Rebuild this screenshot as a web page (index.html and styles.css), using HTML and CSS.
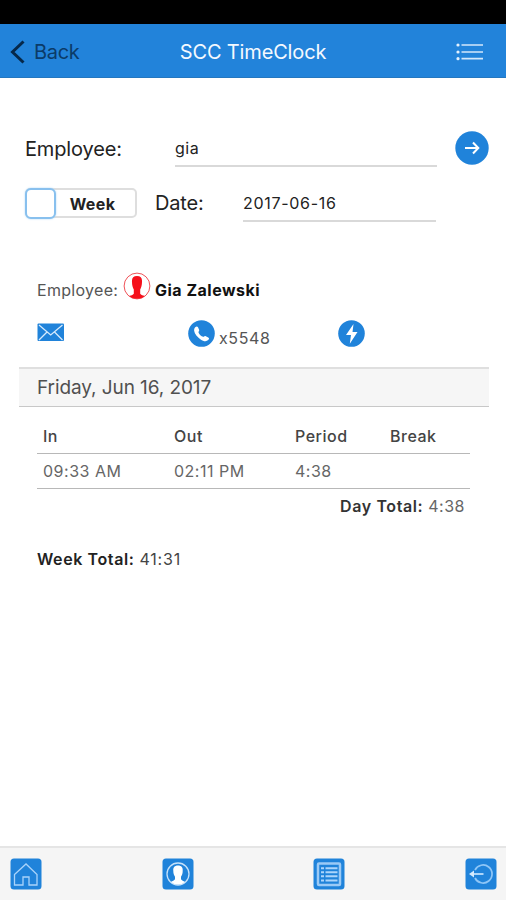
FILE: index.html
```html
<!DOCTYPE html>
<html lang="en">
<head>
<meta charset="utf-8">
<title>SCC TimeClock</title>
<link rel="stylesheet" href="styles.css">
</head>
<body>
<div class="status"></div>
<header class="navbar">
  <a class="back">
    <svg width="16" height="26" viewBox="0 0 16 26"><path d="M14.500 2.500 3.500 13l11 10.500" fill="none" stroke="#06284a" stroke-width="3"/></svg>
    <span class="back-label">Back</span>
  </a>
  <h1 class="title"><span>SCC TimeClock</span></h1>
  <svg class="menu" width="28" height="20" viewBox="0 0 28 20"><g stroke="#d3e8fb" stroke-width="1.700"><path d="M5.500 3H27M5.500 10H27M5.500 16.700H27"/></g><g fill="#e4f1fd"><circle cx="2" cy="3" r="1.600"/><circle cx="2" cy="10" r="1.600"/><circle cx="2" cy="16.700" r="1.600"/></g></svg>
</header>
<main class="content">
  <div class="search-row">
    <label class="label">Employee:</label>
    <div class="field name-field"><span>gia</span></div>
    <svg class="go" width="34" height="34" viewBox="0 0 34 34"><circle cx="17" cy="17" r="16.700" fill="#2083da"/><path d="M10 17H23M18 11.500 23.300 17 18 22.500" fill="none" stroke="#fff" stroke-width="2"/></svg>
  </div>
  <div class="date-row">
    <div class="toggle"><span class="knob"></span><b>Week</b></div>
    <label class="label">Date:</label>
    <div class="field date-field"><span>2017-06-16</span></div>
  </div>
  <div class="person">
    <span class="person-label">Employee:</span>
    <svg width="28" height="28" viewBox="0 0 28 28"><circle cx="14" cy="14" r="12.900" fill="#fff" stroke="#f05258" stroke-width="1"/><path d="M14 4c3.700 0 5.300 2 5 6 0 3.300-.8 5.500-1.800 7.500v4.300c.8 1.300 2.800 1.600 4.600 2.400a13 13 0 0 1-15.600 0c1.800-.8 3.800-1.100 4.600-2.400v-4.300C9.800 15.500 9 13.300 9 10c-.3-4 1.300-6 5-6Z" fill="#f5101b"/></svg>
    <b class="person-name">Gia Zalewski</b>
  </div>
  <div class="contacts">
    <svg class="mail" width="28" height="19" viewBox="0 0 28 19"><rect x=".5" y=".5" width="26.500" height="17.500" rx="1" fill="#2083da"/><path d="m2 2 11.700 10L25.500 2M2 17l8-8M25.500 17l-8-8" fill="none" stroke="#d6eafc" stroke-width="1.300"/></svg>
    <svg width="27" height="27" viewBox="0 0 27 27"><circle cx="13.500" cy="13.500" r="13.300" fill="#2083da"/><path d="M7.200 7.200C8.400 6 9.500 6.200 10 7.300l1.200 2.800c.3.800-.9 1.600-.7 2.300.8 2 2.600 3.700 4.700 4.400.8.200 1.400-1 2.200-.7l2.800 1.400c1.100.6 1.100 1.500 0 2.600-1.800 1.700-4.700 1.300-7.600-.7-3.200-2.100-6-5.200-6.400-8.300-.2-1.600.1-3 1-3.900Z" fill="#fff"/></svg>
    <span class="ext">x5548</span>
    <svg class="bolt" width="27" height="27" viewBox="0 0 27 27"><circle cx="13.500" cy="13.500" r="13.300" fill="#2083da"/><path d="M15.500 4 8 15h5l-1.200 8.700L19.500 12h-5Z" fill="#fff"/></svg>
  </div>
  <div class="day-bar"><span>Friday, Jun 16, 2017</span></div>
  <table class="times">
    <colgroup><col class="c-in"><col class="c-out"><col class="c-period"><col></colgroup>
    <tr><th>In</th><th>Out</th><th>Period</th><th>Break</th></tr>
    <tr><td>09:33 AM</td><td>02:11 PM</td><td>4:38</td><td></td></tr>
  </table>
  <div class="day-total"><b>Day Total:</b> <span>4:38</span></div>
  <div class="week-total"><b>Week Total:</b> <span>41:31</span></div>
</main>
<footer class="tabs">
  <svg width="32" height="32" viewBox="0 0 32 32"><rect x=".5" y=".5" width="31" height="31" rx="3.500" fill="#2083da"/><path d="M4.500 16.500 16 6l11 10.500V27h-8v-8h-6v8H4.500Z" fill="none" stroke="#a9d3fa" stroke-width="1.300"/></svg>
  <svg width="32" height="32" viewBox="0 0 32 32"><rect x=".5" y=".5" width="31" height="31" rx="3.500" fill="#2083da"/><circle cx="16" cy="16" r="11" fill="none" stroke="#c5e1fa" stroke-width="1.300"/><path d="M16 7.500c3.600 0 5 2.200 4.700 5.200 0 2.800-.7 4.300-1.700 6v2.500c.8 1.400 2.400 1.400 4 2.700a10.700 10.700 0 0 1-14 0c1.600-1.300 3.200-1.300 4-2.700v-2.500c-1-1.700-1.700-3.200-1.700-6-.3-3 1.100-5.200 4.700-5.200Z" fill="#fff"/></svg>
  <svg width="32" height="32" viewBox="0 0 32 32"><rect x=".5" y=".5" width="31" height="31" rx="3.500" fill="#2083da"/><rect x="5" y="5.500" width="22" height="21.500" rx="1" fill="none" stroke="#9bcaf6" stroke-width="2.500"/><path d="M8 10.300h3M12.500 10.300h12M8 14.300h3M12.500 14.300h12M8 18.300h3M12.500 18.300h12M8 22.500h3M12.500 22.500h12" stroke="#acd5fb" stroke-width="1.900"/></svg>
  <svg width="32" height="32" viewBox="0 0 32 32"><rect x=".5" y=".5" width="31" height="31" rx="3.500" fill="#2083da"/><path d="M10 12a9 9 0 1 1 0 8" fill="none" stroke="#8fc6f7" stroke-width="1.700"/><path d="M7 16h11.500" stroke="#b5dafb" stroke-width="1.900"/><path d="m4 16 5-3.500v7Z" fill="#d5eafd"/></svg>
</footer>
</body>
</html>
```
FILE: styles.css
```css
* { box-sizing: border-box; }
body {
  margin: 0;
  height: 900px;
  display: flex;
  flex-direction: column;
  background: #fff;
  color: #222;
  font-family: Inter, "Liberation Sans", sans-serif;
  font-size: 16px;
  letter-spacing: 0.5px;
  overflow: hidden;
}
svg { display: block; flex: none; }
.status { height: 24px; background: #000; }
.navbar {
  height: 54px;
  padding-top: 2px;
  display: grid;
  grid-template-columns: 120px 1fr 120px;
  align-items: center;
  background: #2283da;
  border-bottom: 1px solid #2577bf;
  font-size: 20px;
}
.back { display: flex; align-items: center; padding-left: 9px; gap: 9px; color: #0b3b68; letter-spacing: -0.3px; }
.title { margin: 0; text-align: center; font-size: 20px; font-weight: 400; letter-spacing: -0.15px; color: #f4f9ff; }
.menu { justify-self: end; margin-right: 22px; }
.content { flex: 1; padding: 52px 17px 0 19px; }
.search-row { height: 37px; display: flex; align-items: flex-start; padding-left: 6px; }
.label { font-size: 20px; line-height: 37px; letter-spacing: -0.15px; }
.search-row .label { width: 150px; line-height: 38px; }
.field { height: 37px; line-height: 36px; border-bottom: 2px solid #d9d9d9; }
.name-field { width: 262px; line-height: 37px; }
.go { margin: 1px 0 0 18px; }
.date-row { height: 37px; margin-top: 18px; display: flex; padding-left: 6px; }
.toggle {
  width: 112px;
  height: 30px;
  margin: 3px 18px 0 0;
  display: flex;
  border: 2px solid #dedede;
  border-radius: 5px;
}
.toggle b { flex: 1; padding-right: 6px; text-align: center; line-height: 28px; letter-spacing: 0.4px; }
.knob { width: 31px; height: 31px; margin: -2px 0 0 -2px; border: 2px solid #88c0ee; border-radius: 6px; background: #fff; box-shadow: 0 0 2px #a8d5f6; }
.date-row .label { width: 88px; }
.date-field { width: 193px; letter-spacing: 0.7px; }
.person { height: 28px; margin-top: 50px; padding-left: 18px; display: flex; line-height: 37px; }
.person-label { width: 86px; color: #555; letter-spacing: 0.3px; }
.person-name { margin-left: 4px; color: #111; }
.contacts { height: 27px; margin-top: 20px; padding-left: 18px; display: flex; }
.mail { margin: 3px 123px 0 0; }
.ext { width: 118px; margin-left: 4px; line-height: 37px; color: #555; letter-spacing: 0.6px; }
.bolt { margin-left: 1px; }
.day-bar {
  height: 40px;
  margin-top: 20px;
  padding-left: 18px;
  border-top: 2px solid #dfdfdf;
  border-bottom: 1px solid #c8c8c8;
  background: #f6f6f6;
  color: #505050;
  font-size: 19px;
  letter-spacing: -0.08px;
  line-height: 38px;
}
.times { width: 433px; margin: 11px 0 0 18px; border-collapse: collapse; table-layout: fixed; }
.c-in { width: 131px; }
.c-out { width: 121px; }
.c-period { width: 95px; }
.times th, .times td { height: 35px; padding: 0 6px; text-align: left; border-bottom: 1px solid #b8b8b8; color: #666; }
.times th { padding-top: 1px; font-weight: 500; color: #444; }
.day-total { margin: 7px 24px 0 0; text-align: right; line-height: 21px; color: #666; }
.day-total b { color: #333; font-weight: 600; letter-spacing: 0.6px; }
.week-total { margin: 32px 0 0 18px; line-height: 21px; color: #444; }
.week-total b { color: #222; font-weight: 600; letter-spacing: 0.6px; }
.week-total span { letter-spacing: 0.8px; }
.tabs {
  height: 54px;
  padding: 0 9px 0 10px;
  display: flex;
  justify-content: space-between;
  align-items: center;
  background: #f5f5f5;
  border-top: 2px solid #e5e5e5;
}
```
